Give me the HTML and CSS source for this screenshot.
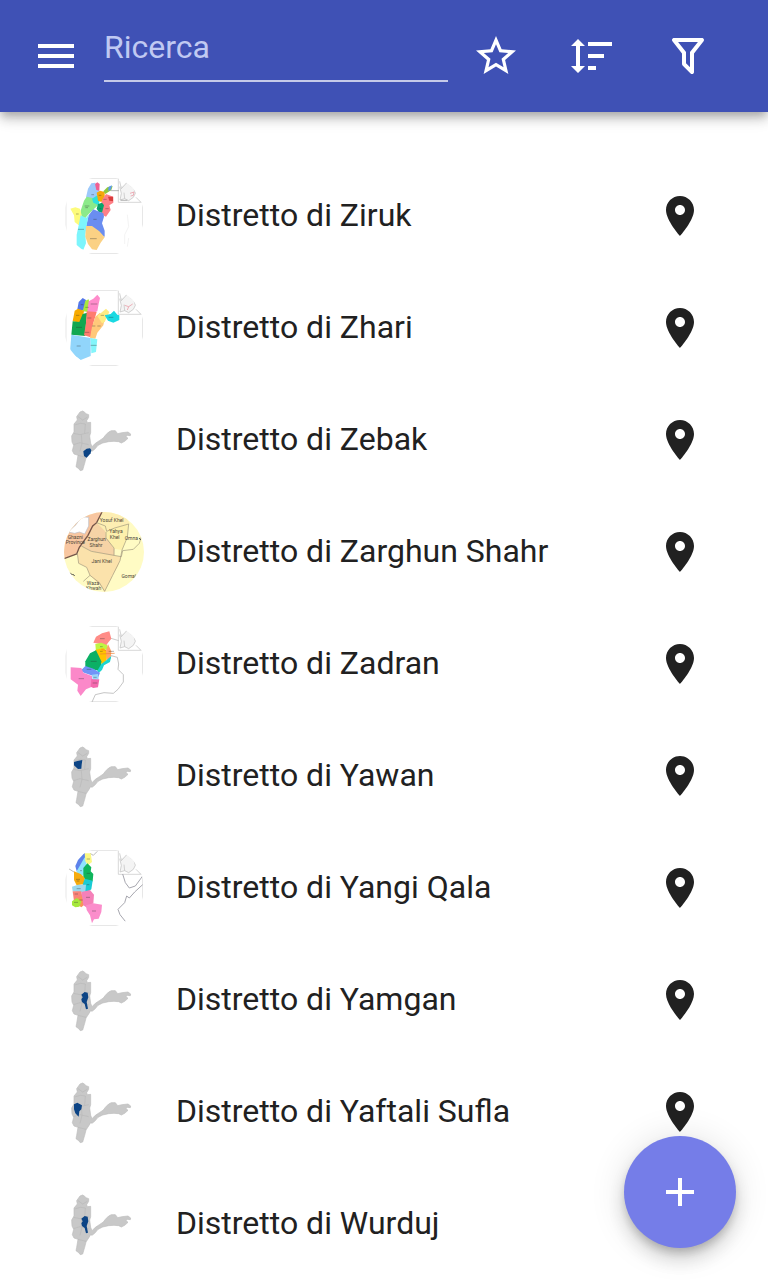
FILE: index.html
```html
<!DOCTYPE html>
<html lang="it">
<head>
  <meta charset="UTF-8" />
  <meta name="viewport" content="width=device-width, initial-scale=1.0" />
  <title>Distretti</title>
  <link rel="stylesheet" href="styles.css">
</head>
<body>
  <svg class="sprite" aria-hidden="true">
    <symbol id="pin" viewBox="0 0 24 24">
      <path d="M12 2C8.13 2 5 5.13 5 9c0 5.25 7 13 7 13s7-7.75 7-13c0-3.87-3.13-7-7-7zm0 9.500c-1.380 0-2.500-1.120-2.500-2.500s1.120-2.500 2.500-2.500 2.500 1.120 2.500 2.500-1.120 2.500-2.500 2.500z" />
    </symbol>
    <!-- cornice e riquadro della regione -->
    <symbol id="frame" viewBox="24 24 240 240">
      <rect x="30" y="31" width="230" height="225" fill="none" stroke="#dcdcdc" stroke-width="2" />
      <path d="M187 31V103H260" fill="none" stroke="#c4c4c4" stroke-width="2" />
      <path d="M191 56L204 52L214 42L222 52L234 62L238 76L232 88L218 98L206 92L192 96L196 76Z" fill="#f4f4f4" />
      <path d="M191 40L196 62L214 42L222 52L234 62L238 76L232 88L218 98L206 92L192 96L196 76L191 56M206 92L204 74M240 88L254 102" fill="none" stroke="#bdbdbd" stroke-width="2" />
    </symbol>
    <symbol id="badakhshan" viewBox="24 24 240 240">
      <path d="M62 74L72 60L80 57L86 61L90 65L98 68L98 76L92 86L94 92L104 91L104 122L101 132L104 154L108 164L118 154L130 146L142 138L148 130L158 120L166 116L178 116L185 125L198 122L216 120L224 126L223 131L214 130L210 134L216 139L206 148L196 153L188 149L174 148L158 149L140 153L126 160L116 172L108 178L104 176L98 186L90 198L86 214L80 234L73 236L68 230L60 224L62 214L66 190L54 186L49 176L53 160L48 150L47 132L54 120L54 96L64 84Z" fill="#c8c8c8" stroke="#bcbcbc" stroke-width="2" />
      <path d="M66 74L80 84L94 76M58 98L74 94L88 96M52 124L72 128L98 122M52 158L72 152L98 158M76 128L78 154L72 178M88 96L86 124M66 190L90 196" fill="none" stroke="#b8b8b8" stroke-width="2" />
    </symbol>
  </svg>

  <header class="toolbar">
    <button class="menu-button" type="button" aria-label="Menu">
      <svg class="icon" viewBox="0 0 24 24"><path d="M3 18h18v-2H3v2zm0-5h18v-2H3v2zm0-7v2h18V6H3z" /></svg>
    </button>
    <input class="search" type="text" placeholder="Ricerca" aria-label="Ricerca" />
    <button class="tool-button" type="button" aria-label="Preferiti">
      <svg class="icon" viewBox="0 0 24 24"><path d="M22 9.240l-7.190-.62L12 2 9.190 8.630 2 9.240l5.460 4.730L5.820 21 12 17.270 18.180 21l-1.630-7.030L22 9.240zM12 15.400l-3.760 2.270 1-4.280-3.320-2.880 4.380-.38L12 6.100l1.710 4.040 4.380.38-3.320 2.880 1 4.280L12 15.400z" /></svg>
    </button>
    <button class="tool-button" type="button" aria-label="Ordina">
      <svg class="icon" viewBox="324 96 144 144"><path d="M354 117l21 21h-15v60h15l-21 21-21-21h15v-60h-15zM384 126h72v12h-72zM384 162h48v12h-48zM384 198h24v12h-24z" /></svg>
    </button>
    <button class="tool-button" type="button" aria-label="Filtra">
      <svg class="icon" viewBox="0 0 24 24"><path d="M15 19.880C15.040 20.180 14.940 20.500 14.710 20.710C14.320 21.100 13.690 21.100 13.300 20.710L9.290 16.700C9.060 16.470 8.960 16.160 9 15.870V10.750L4.210 4.620C3.870 4.190 3.950 3.560 4.380 3.220C4.570 3.080 4.780 3 5 3H19C19.220 3 19.430 3.080 19.620 3.220C20.050 3.560 20.130 4.190 19.790 4.620L15 10.750V19.880M7.040 5L11 10.060V15.580L13 17.580V10.050L16.960 5H7.040Z" /></svg>
    </button>
  </header>

  <main>
    <ul class="list">
      <li class="row">
        <svg class="avatar" viewBox="24 24 240 240">
          <use href="#frame" x="24" y="24" width="240" height="240" />
          <path d="M206 228L206 200L218 176L214 140M218 210L214 236" fill="none" stroke="#ededed" stroke-width="2" />
          <path d="M90 88L96 62L106 46L118 44L122 62L130 66L124 84L110 94Z" fill="#9cc9fb" />
          <path d="M117 48L124 43L131 48L130 68L121 66Z" fill="#ef5f92" />
          <path d="M74 128L84 98L92 86L110 90L124 104L126 112L108 128L96 140L88 150L76 146Z" fill="#8cea8a" />
          <path d="M108 92L124 82L132 94L128 112L112 104Z" fill="#2ee0dc" />
          <path d="M122 74L132 68L146 72L146 90L136 102L126 98Z" fill="#f5a70a" />
          <path d="M142 70L154 58L170 54L166 66L148 78Z" fill="#8fc83c" />
          <path d="M158 56L168 52L164 66L156 68Z" fill="#5f9bee" />
          <path d="M140 92L150 78L172 86L172 104L160 112L164 126L150 146L138 140L134 112Z" fill="#ff8088" />
          <path d="M156 86L171 86L171 100L160 98Z" fill="#d83d3d" />
          <path d="M126 108L138 104L144 112L138 134L128 132L122 122Z" fill="#08a46b" />
          <path d="M98 142L112 124L126 130L142 136L144 146L138 166L146 188L146 206L132 202L108 176L90 176Z" fill="#6a8df0" />
          <path d="M43 122L58 118L72 122L78 146L72 166L68 172L56 162L54 142Z" fill="#fdfb7c" />
          <path d="M74 142L90 150L98 140L92 172L88 200L90 226L82 245L62 240L62 200L68 172Z" fill="#7df5fc" />
          <path d="M90 174L108 174L130 190L146 208L134 224L122 246L108 244L96 228L88 206Z" fill="#fbd184" />
          <path d="M60 138h8M66 184h18M86 114h14M88 119h8M112 154h10M102 212h20M106 80h8M128 82h8M142 94h10M148 122h10M130 122h6M164 68h24M194 97h20" stroke="#333" stroke-opacity=".55" stroke-width="2" />
          <path d="M222 76l12-4-2 10-8 2" fill="none" stroke="#e88d98" stroke-width="2" />
        </svg>
        <span class="name">Distretto di Ziruk</span>
        <button class="pin-button" type="button" aria-label="Mappa: Distretto di Ziruk"><svg class="icon"><use href="#pin" /></svg></button>
      </li>
      <li class="row">
        <svg class="avatar" viewBox="24 24 240 240">
          <use href="#frame" x="24" y="24" width="240" height="240" />
          <path d="M64 88L68 66L80 54L90 60L86 88L76 94Z" fill="#5377e8" />
          <path d="M82 86L88 62L98 58L104 84L98 96L80 94Z" fill="#a7e83e" />
          <path d="M98 64L112 56L124 44L132 54L128 72L124 94L104 102L94 94Z" fill="#ff8ccb" />
          <path d="M56 92L66 86L84 92L80 118L70 128L50 124Z" fill="#f7ab00" />
          <path d="M50 124L70 126L80 102L94 98L90 130L88 168L46 164Z" fill="#12a750" />
          <path d="M92 94L122 96L112 130L104 172L84 166L90 128Z" fill="#ff7c6f" />
          <path d="M118 110L132 98L146 118L142 136L124 158L118 176L102 174L108 140Z" fill="#ffc87a" />
          <path d="M124 108L150 86L160 96L146 126L138 130Z" fill="#ffec83" />
          <path d="M146 106L164 102L174 92L184 104L190 106L190 120L172 128L156 122Z" fill="#1ad9e2" />
          <path d="M46 164L104 174L104 228L74 240L42 216Z" fill="#91d5fb" />
          <path d="M104 174L124 178L120 216L106 220Z" fill="#84f5fa" />
          <path d="M60 106h10M60 142h18M62 198h12M94 114h12M108 138h10M124 138h10M86 157h14M134 106h10M158 112h14M74 74h8M88 82h10M104 72h20M104 196h18" stroke="#333" stroke-opacity=".55" stroke-width="2" />
          <path d="M206 76l12 4 12-8M218 80l-4 10" fill="none" stroke="#e88d98" stroke-width="2" />
        </svg>
        <span class="name">Distretto di Zhari</span>
        <button class="pin-button" type="button" aria-label="Mappa: Distretto di Zhari"><svg class="icon"><use href="#pin" /></svg></button>
      </li>
      <li class="row">
        <svg class="avatar" viewBox="24 24 240 240">
          <use href="#badakhshan" x="24" y="24" width="240" height="240" />
          <path d="M82 178L92 170L102 169L106 174L104 184L92 197L84 192Z" fill="#0c4485" />
        </svg>
        <span class="name">Distretto di Zebak</span>
        <button class="pin-button" type="button" aria-label="Mappa: Distretto di Zebak"><svg class="icon"><use href="#pin" /></svg></button>
      </li>
      <li class="row">
        <svg class="avatar" viewBox="24 24 240 240">
          <rect x="24" y="24" width="240" height="240" fill="#fffbc4" />
          <path d="M24 24H138L122 56L96 96L64 146L24 164Z" fill="#f8c6a0" />
          <path d="M36 84L60 62L76 38L98 40L98 66L86 90L70 84L56 88Z" fill="#fff" stroke="#b9bec8" stroke-width="2" />
          <path d="M122 56L146 66L150 88L176 124L174 156L106 142L76 126L96 94Z" fill="#f6d3a6" />
          <path d="M64 148L76 126L106 142L196 158L186 186L170 214L146 264L130 242L102 214L92 190L68 178Z" fill="#fbe2ab" />
          <path d="M122 56L138 24H200L222 60L176 72L150 84Z" fill="#fdeeb2" />
          <path d="M148 84L176 72L218 60L214 100L198 138L174 134L150 100Z" fill="#fdf0ac" />
          <path d="M138 24L122 56L110 66L96 94L70 130L62 150L24 164" fill="none" stroke="#76564a" stroke-width="4" />
          <path d="M122 56L148 66L152 82L176 72L218 60L214 100L198 138L192 170L170 214L146 262M150 84L150 102L174 132V154M76 126L106 142L196 158M64 148L68 178L92 190L102 214L130 236L146 262M82 232L102 214M196 158L200 140L232 136L250 118L256 98" fill="none" stroke="#9f957b" stroke-width="2" />
          <g class="map-label">
            <text x="167" y="54">Yosuf Khel</text>
            <text x="180" y="88">Yahya</text>
            <text x="176" y="106">Khel</text>
            <text x="226" y="108">Omna</text>
            <text x="122" y="112">Zarghun</text>
            <text x="120" y="128">Shahr</text>
            <text x="137" y="176">Jani Khel</text>
            <text x="218" y="222">Gomal</text>
            <text x="111" y="242">Waza</text>
            <text x="113" y="258">Khwah</text>
            <text x="58" y="104">Ghazni</text>
            <text x="58" y="120">Province</text>
          </g>
          <path d="M42 206l6 6 2-2 6 6M250 102l4 6" fill="none" stroke="#444" stroke-width="3" />
        </svg>
        <span class="name">Distretto di Zarghun Shahr</span>
        <button class="pin-button" type="button" aria-label="Mappa: Distretto di Zarghun Shahr"><svg class="icon"><use href="#pin" /></svg></button>
      </li>
      <li class="row">
        <svg class="avatar" viewBox="24 24 240 240">
          <use href="#frame" x="24" y="24" width="240" height="240" />
          <path d="M162 118L184 124L188 144L186 160L202 176V198L186 220L172 232L144 230L118 236L108 258" fill="none" stroke="#a8a8a8" stroke-width="2" />
          <path d="M162 66L188 74" stroke="#b5b5b5" stroke-width="2" />
          <path d="M112 80L120 62L138 52L160 46L166 68L156 80L148 92L134 84Z" fill="#ff8c87" />
          <path d="M118 84L136 80L154 88L156 102L138 100L120 108Z" fill="#bff543" />
          <path d="M118 102L142 96L154 106L152 132L138 148L126 120Z" fill="#ffc400" />
          <path d="M156 84L166 106L164 128L152 132L150 104Z" fill="#ffa36a" />
          <path d="M136 100L150 104M132 114L176 112" stroke="#f08030" stroke-width="2" />
          <path d="M88 136L102 112L120 103L136 136L134 166L110 160L88 154Z" fill="#0cb065" />
          <path d="M136 144L152 132L166 120L162 138L144 148L138 162L128 170L124 164Z" fill="#1ad6d0" />
          <path d="M74 164L88 150L112 158L132 170L126 186L106 178L84 170Z" fill="#7293f7" />
          <path d="M44 154L76 156L82 170L108 180L108 212L90 220L74 240L64 224L66 206L44 190Z" fill="#fb88c9" />
          <path d="M106 188L130 190L126 214L112 216L104 212Z" fill="#f46aae" />
          <path d="M108 176L126 174L128 190L110 190Z" fill="#98d5fa" />
          <path d="M68 188h16M92 160h14M104 136h18M132 68h14M132 92h8M132 106h8M110 201h14M112 184h10M158 106h16" stroke="#333" stroke-opacity=".55" stroke-width="2" />
        </svg>
        <span class="name">Distretto di Zadran</span>
        <button class="pin-button" type="button" aria-label="Mappa: Distretto di Zadran"><svg class="icon"><use href="#pin" /></svg></button>
      </li>
      <li class="row">
        <svg class="avatar" viewBox="24 24 240 240">
          <use href="#badakhshan" x="24" y="24" width="240" height="240" />
          <path d="M54 102L64 99L79 96L77 110L76 122L66 123L54 112Z" fill="#0c4485" />
        </svg>
        <span class="name">Distretto di Yawan</span>
        <button class="pin-button" type="button" aria-label="Mappa: Distretto di Yawan"><svg class="icon"><use href="#pin" /></svg></button>
      </li>
      <li class="row">
        <svg class="avatar" viewBox="24 24 240 240">
          <use href="#frame" x="24" y="24" width="240" height="240" />
          <path d="M200 102L208 128L220 144L238 138L260 108M260 134L236 156L220 174L212 168L206 188L186 208L192 224L208 244" fill="none" stroke="#a6a6ae" stroke-width="3" />
          <path d="M38 86L54 96M102 40L112 46L124 34" fill="none" stroke="#999" stroke-width="2" />
          <path d="M58 78L66 60L86 38L90 54L76 80L62 94Z" fill="#5d82eb" />
          <path d="M62 94L86 52L92 66L88 98L78 108L66 104Z" fill="#8fe3fc" />
          <path d="M86 40L104 40L108 66L96 76L88 64Z" fill="#fbf884" />
          <path d="M82 84L94 70L106 82L104 94L112 102L110 124L96 128L82 112Z" fill="#0fb55c" />
          <path d="M54 94L74 102L86 114L86 132L62 136L54 120Z" fill="#f6ab0e" />
          <path d="M86 116L110 122L106 148L92 158L74 152Z" fill="#18cbd4" />
          <path d="M48 140L66 134L90 134L88 156L66 156L50 154Z" fill="#9bd8ee" />
          <path d="M50 154L76 154L80 176L54 184Z" fill="#fa847a" />
          <path d="M64 174L86 166L90 190L76 202L62 192Z" fill="#f8935b" />
          <path d="M48 184L62 174L76 184L70 200L58 202L48 196Z" fill="#a6e83c" />
          <path d="M76 156L102 150L114 164L112 190L94 204L82 196Z" fill="#f581b9" />
          <path d="M90 196L112 190L138 194L136 216L128 236L114 238L108 250L102 226L92 210Z" fill="#fb8dcb" />
          <path d="M108 213h12M90 172h12M54 187h12M56 162h10M62 146h12M60 118h12M62 123h8M92 100h10M92 134h8M72 92h6M92 57h10M70 180h10" stroke="#333" stroke-opacity=".55" stroke-width="2" />
        </svg>
        <span class="name">Distretto di Yangi Qala</span>
        <button class="pin-button" type="button" aria-label="Mappa: Distretto di Yangi Qala"><svg class="icon"><use href="#pin" /></svg></button>
      </li>
      <li class="row">
        <svg class="avatar" viewBox="24 24 240 240">
          <use href="#badakhshan" x="24" y="24" width="240" height="240" />
          <path d="M76 128L86 120L95 122L97 136L92 150L96 170L90 172L86 156L78 150L76 142L80 136Z" fill="#0c4485" />
        </svg>
        <span class="name">Distretto di Yamgan</span>
        <button class="pin-button" type="button" aria-label="Mappa: Distretto di Yamgan"><svg class="icon"><use href="#pin" /></svg></button>
      </li>
      <li class="row">
        <svg class="avatar" viewBox="24 24 240 240">
          <use href="#badakhshan" x="24" y="24" width="240" height="240" />
          <path d="M54 121L64 116L78 124L76 136L70 142L68 158L58 148L54 136Z" fill="#0c4485" />
        </svg>
        <span class="name">Distretto di Yaftali Sufla</span>
        <button class="pin-button" type="button" aria-label="Mappa: Distretto di Yaftali Sufla"><svg class="icon"><use href="#pin" /></svg></button>
      </li>
      <li class="row">
        <svg class="avatar" viewBox="24 24 240 240">
          <use href="#badakhshan" x="24" y="24" width="240" height="240" />
          <path d="M76 128L86 120L95 122L97 136L92 150L96 170L90 172L86 156L78 150L76 142L80 136Z" fill="#0c4485" />
        </svg>
        <span class="name">Distretto di Wurduj</span>
        <button class="pin-button" type="button" aria-label="Mappa: Distretto di Wurduj"><svg class="icon"><use href="#pin" /></svg></button>
      </li>
    </ul>
  </main>

  <button class="fab" type="button" aria-label="Aggiungi">
    <svg class="icon" viewBox="0 0 24 24"><path d="M19 13h-6v6h-2v-6H5v-2h6V5h2v6h6v2z" /></svg>
  </button>
</body>
</html>
```

FILE: styles.css
```css
* {
  box-sizing: border-box;
  margin: 0;
  padding: 0;
}

body {
  font-family: Roboto, sans-serif;
  font-size: 32px;
  background-color: #fff;
  color: #212121;
}

button {
  display: flex;
  justify-content: center;
  align-items: center;
  border: none;
  background: none;
  color: inherit;
  cursor: pointer;
}

.sprite {
  display: none;
}

.icon {
  display: block;
  width: 48px;
  height: 48px;
  fill: currentColor;
}

.toolbar {
  position: sticky;
  top: 0;
  z-index: 1;
  display: flex;
  align-items: center;
  height: 112px;
  padding: 0 32px;
  background-color: #3f51b5;
  color: #fff;
  box-shadow: 0 4px 8px -2px rgba(0, 0, 0, 0.2), 0 8px 10px rgba(0, 0, 0, 0.14), 0 2px 20px rgba(0, 0, 0, 0.12);
}

.menu-button {
  margin-right: 24px;
}

.search {
  flex: 1;
  min-width: 0;
  height: 52px;
  padding-bottom: 16px;
  border: none;
  border-bottom: 2px solid #c5cae9;
  outline: none;
  background: none;
  color: #fff;
  font-family: inherit;
  font-size: 32px;
}

.search::placeholder {
  color: #c0c9f2;
  opacity: 1;
}

.tool-button {
  width: 96px;
  height: 96px;
}

.list {
  padding-top: 48px;
  list-style: none;
}

.row {
  display: flex;
  align-items: center;
  gap: 32px;
  height: 112px;
  padding: 0 64px;
}

.avatar {
  flex: none;
  width: 80px;
  height: 80px;
  border-radius: 50%;
}

.map-label {
  fill: #4d4638;
  font-size: 15px;
  text-anchor: middle;
}

.name {
  flex: 1;
  padding-bottom: 2px;
  line-height: 48px;
}

.fab {
  position: fixed;
  right: 32px;
  bottom: 32px;
  z-index: 2;
  width: 112px;
  height: 112px;
  border-radius: 50%;
  background-color: #757de8;
  color: #fff;
  box-shadow: 0 6px 10px -2px rgba(0, 0, 0, 0.2), 0 12px 20px rgba(0, 0, 0, 0.14), 0 2px 36px rgba(0, 0, 0, 0.12);
}
```
